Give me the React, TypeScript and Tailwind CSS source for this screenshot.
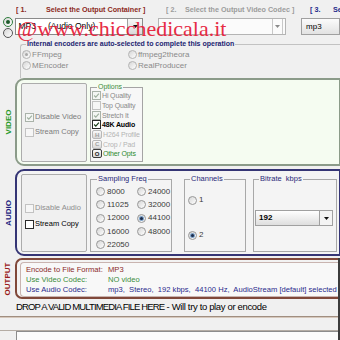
import clsx from 'clsx';

type RadioKind = 'green' | 'dark' | 'faint' | 'plain';

const Arrow = ({ dim }: { dim?: boolean }) => (
  <svg width="5" height="3" viewBox="0 0 5 3">
    <path d="M0 0h5L2.5 3z" fill={dim ? '#8a8a8a' : '#111'} />
  </svg>
);

const Radio = ({ on, kind = 'plain', big }: { on?: boolean; kind?: RadioKind; big?: boolean }) => (
  <span
    className={clsx(
      'flex shrink-0 items-center justify-center rounded-full border bg-gradient-to-br from-[#d6d6d6] to-white',
      big ? 'h-[10px] w-[10px]' : 'h-[9px] w-[9px]',
      kind === 'green' && 'border-[#2f7d3d]',
      kind === 'dark' && 'border-[#555]',
      kind === 'faint' && 'border-[#b4b4b4]',
      kind === 'plain' && 'border-[#979797]',
    )}
  >
    {on && (
      <span
        className={clsx(
          'rounded-full',
          big ? 'h-[4px] w-[4px]' : 'h-[3px] w-[3px]',
          kind === 'green' && 'bg-[#1d5a2a]',
          kind === 'faint' && 'bg-[#a8a8a8]',
          kind === 'plain' && 'bg-[#1c2c4c] ring-1 ring-[#7aa0c8]',
        )}
      />
    )}
  </span>
);

const Check = ({ on, tone }: { on?: boolean; tone: 'dim' | 'off' | 'dark' }) => (
  <span
    className={clsx(
      'flex h-[9px] w-[9px] shrink-0 items-center justify-center border',
      tone === 'dark' && 'border-[#2a2a2a] bg-white',
      tone === 'off' && 'border-[#c2c2c2] bg-[#f6f6f6]',
      tone === 'dim' && 'border-[#a9b2a9] bg-[#f4f6f4]',
    )}
  >
    {on && (
      <svg viewBox="0 0 9 9" className="h-[7px] w-[7px]">
        <path
          d="M1.5 4.5 3.6 6.6 7.6 2"
          fill="none"
          stroke={tone === 'dark' ? '#163a16' : '#9fb09f'}
          strokeWidth="1.5"
        />
      </svg>
    )}
  </span>
);

const Key = ({ ch, dim }: { ch: string; dim?: boolean }) => (
  <span
    className={clsx(
      'flex h-[9px] w-[10px] shrink-0 items-center justify-center rounded-[2px] border bg-gradient-to-b from-[#fafafa] to-[#d8d8d8] text-[6px] font-bold leading-none',
      dim ? 'border-[#b8b8b8] text-[#a0a0a0]' : 'border-[#3c3c3c] text-[#222]',
    )}
  >
    {ch}
  </span>
);

const encoders = [
  { name: 'FFmpeg', on: true },
  { name: 'ffmpeg2theora' },
  { name: 'MEncoder' },
  { name: 'RealProducer' },
];

const rates = ['8000', '24000', '11025', '32000', '12000', '44100', '16000', '48000', '22050'];

export default function App() {
  return (
    <div className="relative h-[340px] w-[340px] overflow-hidden bg-[#f0f0f0] font-['Liberation_Sans',Arial,sans-serif] text-black">
      {/* step headers */}
      <div className="flex h-[16px] items-center whitespace-nowrap pl-[16px] pt-[4px] text-[7.2px] font-bold leading-none">
        <div className="flex w-[150px] shrink-0 overflow-hidden text-[#8c2a22]">
          <span className="w-[30px] shrink-0">[ 1.</span>
          <span>Select the Output Container ]</span>
        </div>
        <div className="flex w-[144px] shrink-0 overflow-hidden text-[#9c9c9c]">
          <span className="w-[19px] shrink-0">[ 2.</span>
          <span>Select the Output Video Codec ]</span>
        </div>
        <div className="flex text-[#1e2a8a]">
          <span className="w-[23px] shrink-0">[ 3.</span>
          <span>Se</span>
        </div>
      </div>

      {/* selectors */}
      <div className="flex h-[24px]">
        <div className="flex w-[16px] flex-col items-center gap-[1px] pt-[1px]">
          <Radio big on kind="green" />
          <Radio big kind="dark" />
        </div>
        <div className="mt-[2px] flex h-[17px] w-[132px] items-center border border-[#8a8a8a] bg-white text-[8.5px]">
          <span className="pl-[2px]">MP3</span>
          <span className="ml-[12px]">(Audio Only)</span>
          <span className="ml-auto flex h-full w-[15px] items-center justify-center border-l border-[#a0a0a0] bg-gradient-to-b from-[#f8f8f8] to-[#dadada]">
            <Arrow />
          </span>
        </div>
        <div className="ml-[15px] mt-[2px] flex h-[17px] w-[132px] justify-end border border-[#b4b4b4] bg-[#fbfbfb]">
          <span className="mr-[2px] flex h-full w-[11px] items-center justify-center border-x border-[#c8c8c8]">
            <Arrow dim />
          </span>
        </div>
        <div className="ml-[15px] mt-[2px] flex h-[17px] w-[40px] items-center border border-[#a0a0a0] bg-gradient-to-b from-[#fbfbfb] to-[#e2e2e2] pl-[4px] text-[8px]">
          mp3
        </div>
      </div>

      {/* encoders */}
      <fieldset className="ml-[20px] h-[38px] rounded-tl-[3px] border border-b-0 border-r-0 border-[#c2c2c2]">
        <legend className="ml-[5px] px-[1px] text-[7px] font-bold leading-[8px] text-[#1c2470]">
          Internal encoders are auto-selected to complete this operation
        </legend>
        <div className="grid grid-cols-[106px_1fr] pl-[1px] pt-[1px] text-[8px] text-[#8a8a8a]">
          {encoders.map((e) => (
            <div key={e.name} className="flex h-[11px] items-center gap-[1px]">
              <Radio on={e.on} kind="faint" />
              {e.name}
            </div>
          ))}
        </div>
      </fieldset>

      {/* video */}
      <div className="flex h-[88px]">
        <div className="flex w-[15px] items-center justify-center pl-[3px]">
          <span className="-rotate-90 whitespace-nowrap text-[8px] font-bold leading-none text-[#2b9a2b]">VIDEO</span>
        </div>
        <div className="flex flex-1 gap-[3px] rounded-l-[9px] border-2 border-r border-[#8b9b89] bg-[#f5fcf1] pb-[2px] pl-[4px] pt-[3px]">
          <div className="flex w-[66px] flex-col justify-center gap-[6px] rounded-[2px] border border-[#acacac] bg-[#f0f0f0] pl-[3px] pt-[4px] text-[7.5px] leading-none text-[#7c7c7c]">
            <div className="flex items-center gap-[1px]">
              <Check on tone="dim" />
              Disable Video
            </div>
            <div className="flex items-center gap-[1px]">
              <Check tone="off" />
              Stream Copy
            </div>
          </div>
          <fieldset className="w-[53px] border border-[#a4a4a4] bg-[#f7f7f7] pl-[1px]">
            <legend className="ml-[5px] px-[1px] text-[7px] leading-[8px] text-[#3c8c3c]">Options</legend>
            <div className="flex flex-col whitespace-nowrap text-[7px] leading-none tracking-[-0.15px]">
              <div className="flex h-[9.7px] items-center gap-[1px] text-[#8a8a8a]">
                <Check on tone="dim" />
                Hi Quality
              </div>
              <div className="flex h-[9.7px] items-center gap-[1px] text-[#8a8a8a]">
                <Check tone="off" />
                Top Quality
              </div>
              <div className="flex h-[9.7px] items-center gap-[1px] text-[#8a8a8a]">
                <Check on tone="dim" />
                Stretch It
              </div>
              <div className="flex h-[9.7px] items-center gap-[1px] font-bold text-black">
                <Check on tone="dark" />
                48K Audio
              </div>
              <div className="flex h-[9.7px] items-center gap-[1px] text-[#b4b4b4]">
                <Key ch="H" dim />
                H264 Profile
              </div>
              <div className="flex h-[9.7px] items-center gap-[1px] text-[#b4b4b4]">
                <Key ch="C" dim />
                Crop / Pad
              </div>
              <div className="flex h-[9.7px] items-center gap-[1px] text-[#2e8a2e]">
                <Key ch="O" />
                Other Opts
              </div>
            </div>
          </fieldset>
        </div>
      </div>

      {/* audio */}
      <div className="mt-[3px] flex h-[87px]">
        <div className="flex w-[15px] items-center justify-center pl-[3px]">
          <span className="-rotate-90 whitespace-nowrap text-[8px] font-bold leading-none text-[#1e1e80]">AUDIO</span>
        </div>
        <div className="flex flex-1 rounded-l-[9px] border-2 border-r border-[#353575] bg-[#f4f4f4] pb-[2px] pl-[4px] pt-[3px]">
          <div className="flex w-[66px] flex-col justify-center gap-[7px] rounded-[2px] border border-[#acacac] bg-[#f0f0f0] pl-[3px] pt-[6px] text-[7.5px] leading-none">
            <div className="flex items-center gap-[1px] text-[#8e8e8e]">
              <Check tone="off" />
              Disable Audio
            </div>
            <div className="flex items-center gap-[1px] text-black">
              <Check tone="dark" />
              Stream Copy
            </div>
          </div>
          <fieldset className="ml-[3px] mt-[1px] w-[82px] border border-[#a8a8a8]">
            <legend className="ml-[6px] px-[1px] text-[7.5px] leading-[8px] text-[#2a2a7a]">Sampling Freq</legend>
            <div className="grid auto-rows-[13.3px] grid-cols-[41px_1fr] pl-[5px] pt-[2px] text-[8px] leading-none text-[#3a3a3a]">
              {rates.map((r) => (
                <div key={r} className="flex items-center gap-[2px]">
                  <Radio on={r === '44100'} />
                  {r}
                </div>
              ))}
            </div>
          </fieldset>
          <fieldset className="ml-[12px] mt-[1px] w-[62px] border border-[#a8a8a8]">
            <legend className="ml-[5px] px-[1px] text-[7.5px] leading-[8px] text-[#2a2a7a]">Channels</legend>
            <div className="flex flex-col gap-[25px] pl-[3px] pt-[12px] text-[8px] leading-none text-[#3a3a3a]">
              <div className="flex h-[10px] items-center gap-[2px]">
                <Radio />1
              </div>
              <div className="flex h-[10px] items-center gap-[2px]">
                <Radio on />2
              </div>
            </div>
          </fieldset>
          <fieldset className="ml-[7px] mt-[1px] w-[84px] border border-[#a8a8a8]">
            <legend className="ml-[5px] whitespace-pre px-[1px] text-[7.5px] leading-[8px] text-[#2a2a7a]">
              Bitrate  kbps
            </legend>
            <div className="ml-[1px] mt-[27px] flex h-[16px] w-[78px] items-center border border-[#a0a0a0] bg-gradient-to-b from-white to-[#dedede] text-[8px] font-bold">
              <span className="pl-[3px]">192</span>
              <span className="ml-auto flex h-full w-[13px] items-center justify-center border-l border-[#a0a0a0] bg-[#f4f4f4]">
                <Arrow />
              </span>
            </div>
          </fieldset>
        </div>
      </div>

      {/* output and drop zone */}
      <div className="mt-[2px] border-r-2 border-[#3c3c3c]">
        <div className="flex h-[41px]">
          <div className="flex w-[15px] items-center justify-center pl-[1px]">
            <span className="-rotate-90 whitespace-nowrap text-[8px] font-bold leading-none text-[#9a1c1c]">OUTPUT</span>
          </div>
          <div className="flex-1 overflow-hidden rounded-l-[7px] border-2 border-r-0 border-[#80483a] bg-[#f3f3f3] pl-[3px] pt-[2px]">
            <div className="h-[35px] whitespace-pre rounded-l-[4px] border border-r-0 border-[#c9b4b0] bg-[#f8f8f8] pl-[5px] pt-[2px] text-[7.6px] leading-[10px]">
              <div className="flex text-[#8a2a2a]">
                <span className="w-[82px] shrink-0">Encode to File Format:</span>
                <span>MP3</span>
              </div>
              <div className="flex text-[#3a8c3a]">
                <span className="w-[82px] shrink-0">Use Video Codec:</span>
                <span>NO video</span>
              </div>
              <div className="flex text-[#2a2a8c]">
                <span className="w-[82px] shrink-0">Use Audio Codec:</span>
                <span>mp3,  Stereo,  192 kbps,  44100 Hz,  AudioStream [default] selected</span>
              </div>
            </div>
          </div>
        </div>
        <div className="flex h-[17px] items-center whitespace-pre pl-[16px] text-[9.5px]">
          <span className="tracking-[-0.85px]">DROP A VALID MULTIMEDIA FILE HERE</span>
          <span className="tracking-[-0.35px]"> - Will try to play or encode</span>
        </div>
        <div className="border-t border-[#a08e80]" />
        <div className="h-[13px] border-t border-[#d6c8bc]" />
        <div className="flex h-[10px] border-t border-[#b4aca4]">
          <div className="ml-[16px] flex-1 border-l border-t border-[#8c8c8c] bg-[#fbfbfb]" />
        </div>
      </div>

      {/* watermark */}
      <div className="pointer-events-none absolute left-[17px] top-[18px] whitespace-nowrap font-['Liberation_Serif',serif] text-[22px] leading-[22px] text-[#e6213b] opacity-95">
        @www.chicchedicala.it
      </div>
    </div>
  );
}
